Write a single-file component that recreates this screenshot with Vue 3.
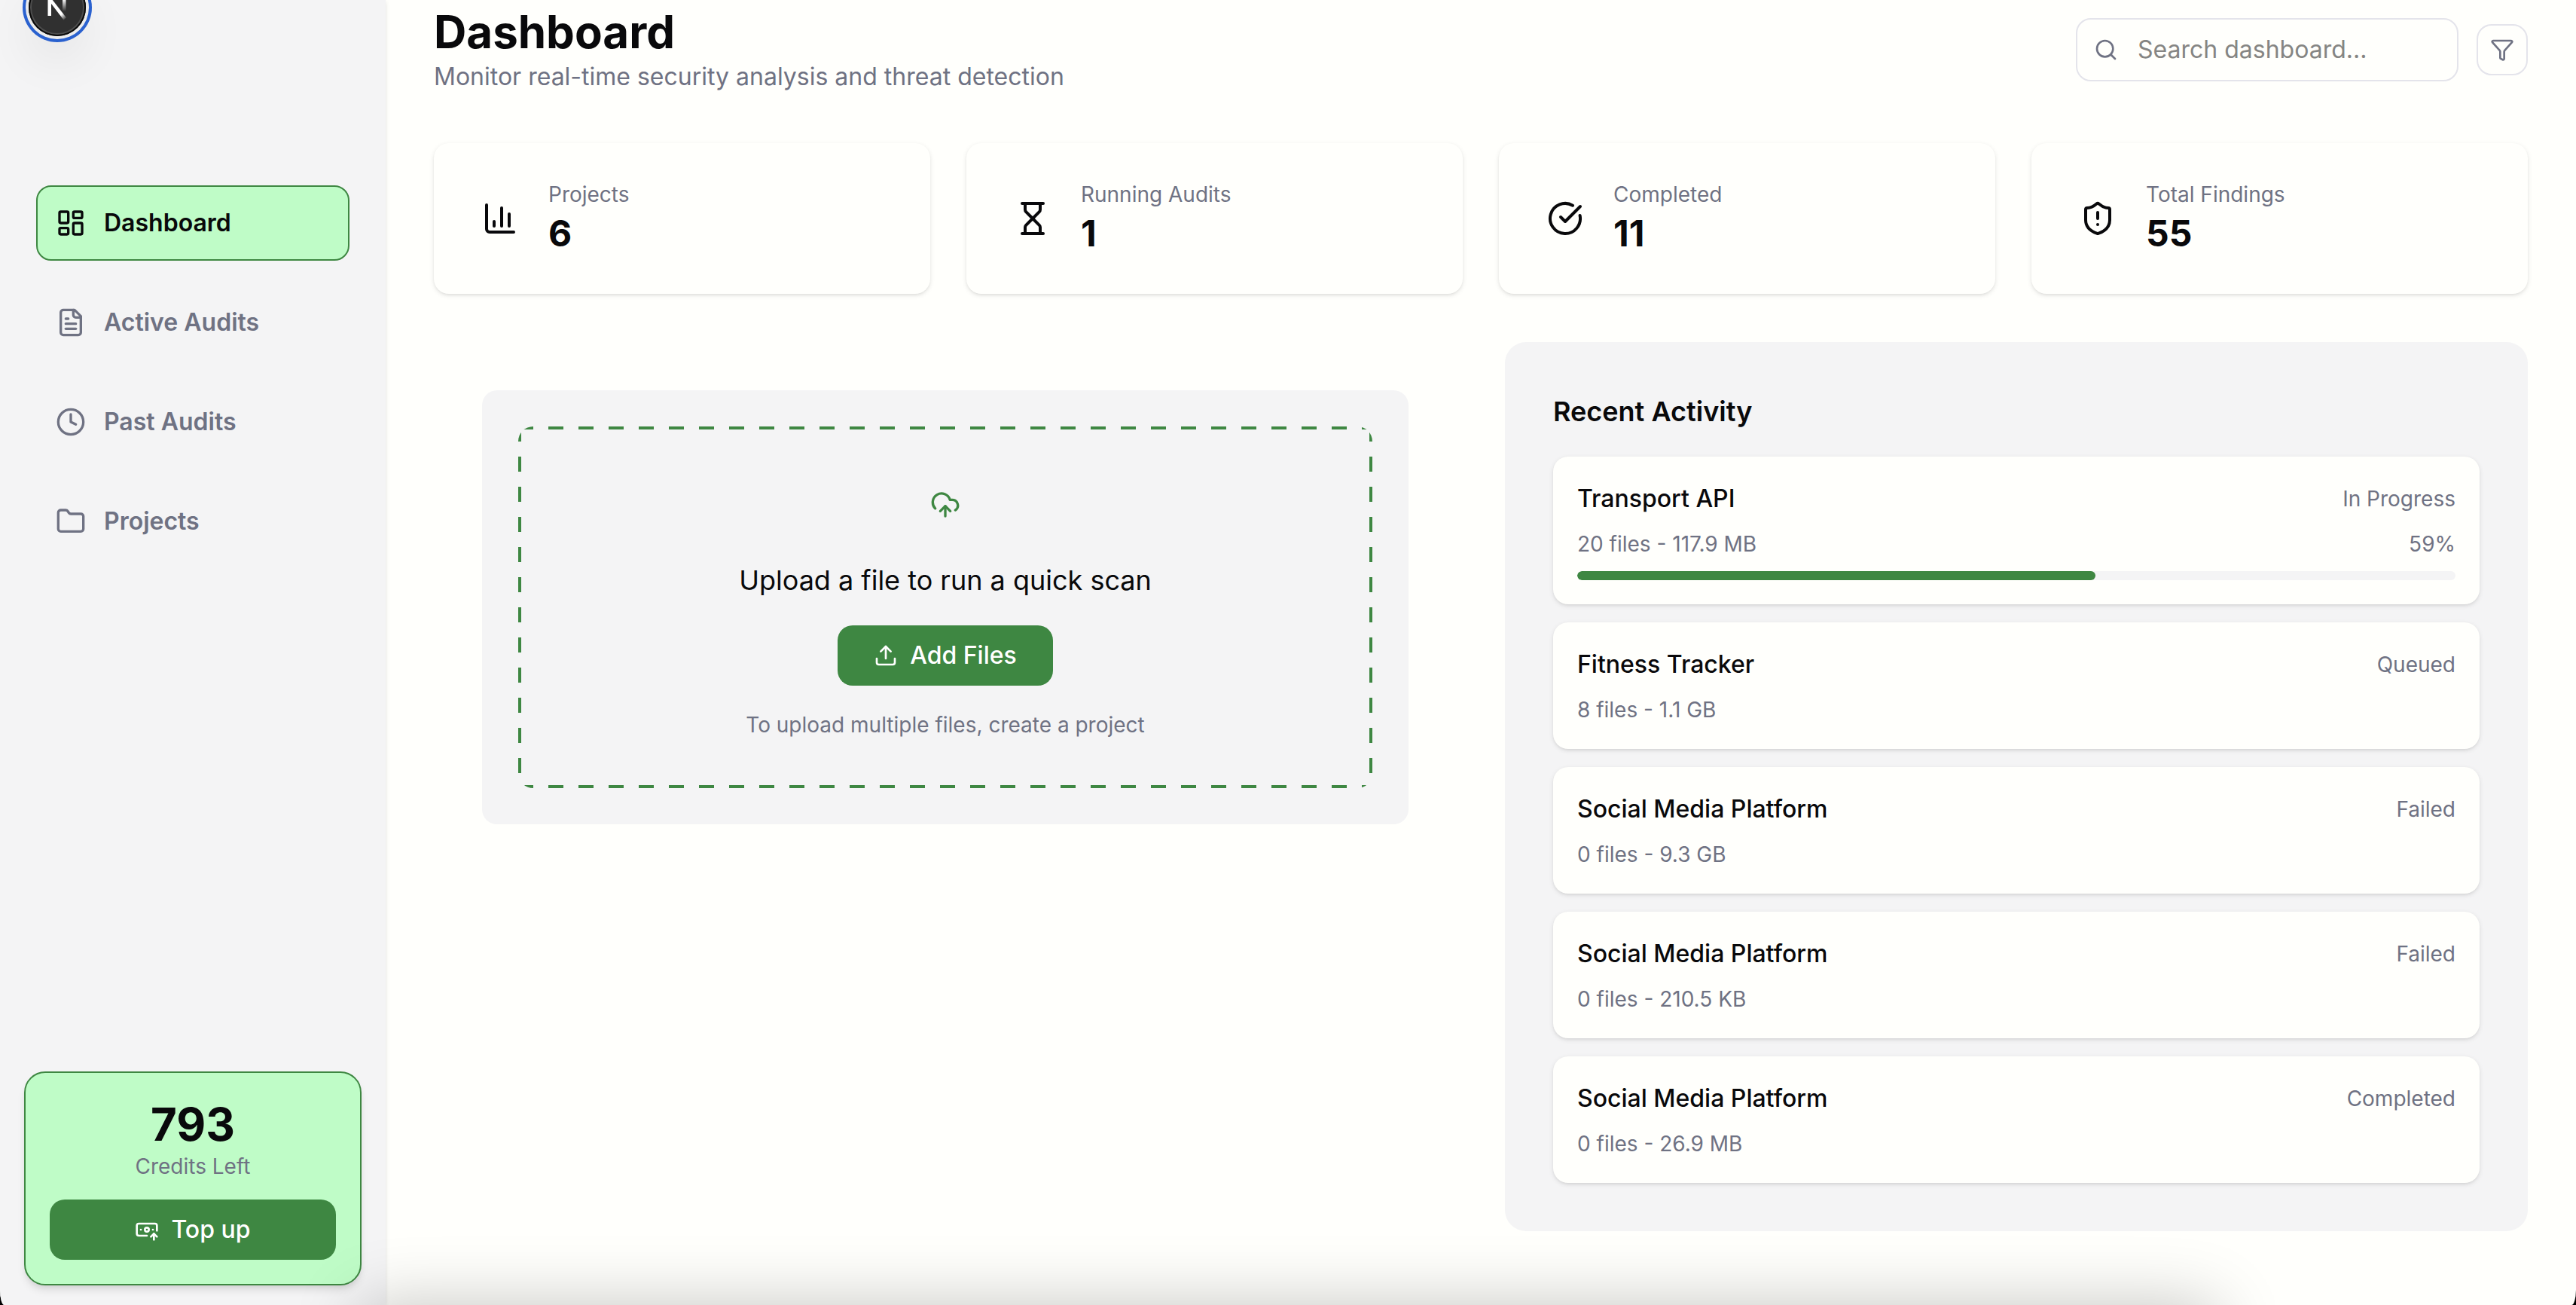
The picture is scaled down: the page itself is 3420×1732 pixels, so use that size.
<script setup>
import { ref } from 'vue'

const query = ref('')

const icons = {
  dashboard: [
    'M4 3h5a1 1 0 0 1 1 1v7a1 1 0 0 1-1 1H4a1 1 0 0 1-1-1V4a1 1 0 0 1 1-1z',
    'M15 3h5a1 1 0 0 1 1 1v3a1 1 0 0 1-1 1h-5a1 1 0 0 1-1-1V4a1 1 0 0 1 1-1z',
    'M15 12h5a1 1 0 0 1 1 1v7a1 1 0 0 1-1 1h-5a1 1 0 0 1-1-1v-7a1 1 0 0 1 1-1z',
    'M4 16h5a1 1 0 0 1 1 1v3a1 1 0 0 1-1 1H4a1 1 0 0 1-1-1v-3a1 1 0 0 1 1-1z',
  ],
  file: [
    'M15 2H6a2 2 0 0 0-2 2v16a2 2 0 0 0 2 2h12a2 2 0 0 0 2-2V7z',
    'M14 2v4a2 2 0 0 0 2 2h4',
    'M10 9H8',
    'M16 13H8',
    'M16 17H8',
  ],
  clock: ['M12 2a10 10 0 1 0 0 20a10 10 0 1 0 0-20z', 'M12 6v6l4 2'],
  folder: [
    'M20 20a2 2 0 0 0 2-2V8a2 2 0 0 0-2-2h-7.9a2 2 0 0 1-1.69-.9L9.6 3.9A2 2 0 0 0 7.93 3H4a2 2 0 0 0-2 2v13a2 2 0 0 0 2 2Z',
  ],
  chart: ['M3 3v16a2 2 0 0 0 2 2h16', 'M18 17V9', 'M13 17V5', 'M8 17v-3'],
  hourglass: [
    'M5 22h14',
    'M5 2h14',
    'M17 22v-4.172a2 2 0 0 0-.586-1.414L12 12l-4.414 4.414A2 2 0 0 0 7 17.828V22',
    'M7 2v4.172a2 2 0 0 0 .586 1.414L12 12l4.414-4.414A2 2 0 0 0 17 6.172V2',
  ],
  check: ['M21.801 10A10 10 0 1 1 17 3.335', 'm9 11 3 3L22 4'],
  shield: [
    'M20 13c0 5-3.5 7.5-7.66 8.95a1 1 0 0 1-.67-.01C7.5 20.5 4 18 4 13V6a1 1 0 0 1 1-1c2 0 4.5-1.2 6.24-2.72a1.17 1.17 0 0 1 1.52 0C14.51 3.81 17 5 19 5a1 1 0 0 1 1 1z',
    'M12 8v4',
    'M12 16h.01',
  ],
}

const navItems = [
  { label: 'Dashboard', icon: 'dashboard', active: true },
  { label: 'Active Audits', icon: 'file' },
  { label: 'Past Audits', icon: 'clock' },
  { label: 'Projects', icon: 'folder' },
]

const stats = [
  { label: 'Projects', value: 6, icon: 'chart' },
  { label: 'Running Audits', value: 1, icon: 'hourglass' },
  { label: 'Completed', value: 11, icon: 'check' },
  { label: 'Total Findings', value: 55, icon: 'shield' },
]

const activity = [
  { name: 'Transport API', meta: '20 files - 117.9 MB', status: 'In Progress', progress: 59 },
  { name: 'Fitness Tracker', meta: '8 files - 1.1 GB', status: 'Queued' },
  { name: 'Social Media Platform', meta: '0 files - 9.3 GB', status: 'Failed' },
  { name: 'Social Media Platform', meta: '0 files - 210.5 KB', status: 'Failed' },
  { name: 'Social Media Platform', meta: '0 files - 26.9 MB', status: 'Completed' },
]
</script>

<template>
  <div class="shell">
    <aside class="sidebar">
      <nav class="nav" aria-label="Main">
        <a
          v-for="item in navItems"
          :key="item.label"
          href="#"
          class="nav-link"
          :class="{ active: item.active }"
          :aria-current="item.active ? 'page' : undefined"
        >
          <svg class="icon icon-md" viewBox="0 0 24 24" aria-hidden="true">
            <path v-for="d in icons[item.icon]" :key="d" :d="d" />
          </svg>
          <span>{{ item.label }}</span>
        </a>
      </nav>

      <section class="credits">
        <strong class="credits-value">793</strong>
        <span class="credits-label">Credits Left</span>
        <button type="button" class="btn btn-wide">
          <svg class="icon icon-sm" viewBox="0 0 24 24" aria-hidden="true">
            <path d="M12 18H4a2 2 0 0 1-2-2V8a2 2 0 0 1 2-2h16a2 2 0 0 1 2 2v5" />
            <path d="M18 12h.01" />
            <path d="M19 22v-6" />
            <path d="m22 19-3-3-3 3" />
            <path d="M6 12h.01" />
            <circle cx="12" cy="12" r="2" />
          </svg>
          Top up
        </button>
      </section>
    </aside>

    <main class="main">
      <header class="header">
        <div>
          <h1 class="title">Dashboard</h1>
          <p class="subtitle">Monitor real-time security analysis and threat detection</p>
        </div>
        <div class="tools">
          <label class="search">
            <svg class="icon icon-sm" viewBox="0 0 24 24" aria-hidden="true">
              <circle cx="11" cy="11" r="8" />
              <path d="m21 21-4.34-4.34" />
            </svg>
            <input v-model="query" type="search" placeholder="Search dashboard..." aria-label="Search dashboard" />
          </label>
          <button type="button" class="filter" aria-label="Filter">
            <svg class="icon icon-sm" viewBox="0 0 24 24" aria-hidden="true">
              <path
                d="M10 20a1 1 0 0 0 .553.895l2 1A1 1 0 0 0 14 21v-7a2 2 0 0 1 .517-1.341L21.74 4.67A1 1 0 0 0 21 3H3a1 1 0 0 0-.742 1.67l7.225 7.989A2 2 0 0 1 10 14z"
              />
            </svg>
          </button>
        </div>
      </header>

      <section class="stats" aria-label="Summary">
        <article v-for="stat in stats" :key="stat.label" class="stat">
          <svg class="icon icon-lg" viewBox="0 0 24 24" aria-hidden="true">
            <path v-for="d in icons[stat.icon]" :key="d" :d="d" />
          </svg>
          <div>
            <p class="stat-label">{{ stat.label }}</p>
            <p class="stat-value">{{ stat.value }}</p>
          </div>
        </article>
      </section>

      <div class="columns">
        <section class="upload-area">
          <div class="upload-card">
            <div class="dropzone">
              <span class="cloud">
                <svg class="icon icon-md" viewBox="0 0 24 24" aria-hidden="true">
                  <path d="M12 13v8" />
                  <path d="M4 14.899A7 7 0 1 1 15.71 8h1.79a4.5 4.5 0 0 1 2.5 8.242" />
                  <path d="m8 17 4-4 4 4" />
                </svg>
              </span>
              <p class="upload-title">Upload a file to run a quick scan</p>
              <button type="button" class="btn">
                <svg class="icon icon-sm" viewBox="0 0 24 24" aria-hidden="true">
                  <path d="M12 3v12" />
                  <path d="m17 8-5-5-5 5" />
                  <path d="M21 15v4a2 2 0 0 1-2 2H5a2 2 0 0 1-2-2v-4" />
                </svg>
                Add Files
              </button>
              <p class="upload-note">To upload multiple files, create a project</p>
            </div>
          </div>
        </section>

        <section class="panel">
          <h2 class="panel-title">Recent Activity</h2>
          <ul class="activity">
            <li v-for="(entry, i) in activity" :key="i" class="entry">
              <div class="entry-row">
                <h3 class="entry-name">{{ entry.name }}</h3>
                <span class="small">{{ entry.status }}</span>
              </div>
              <div class="entry-row">
                <span class="small">{{ entry.meta }}</span>
                <span v-if="entry.progress" class="small">{{ entry.progress }}%</span>
              </div>
              <div
                v-if="entry.progress"
                class="track"
                role="progressbar"
                aria-label="Audit progress"
                aria-valuemin="0"
                aria-valuemax="100"
                :aria-valuenow="entry.progress"
              >
                <div class="fill" :style="{ width: entry.progress + '%' }"></div>
              </div>
            </li>
          </ul>
        </section>
      </div>
    </main>

    <button type="button" class="devtools" aria-label="Open developer tools">
      <svg viewBox="0 0 76 76" aria-hidden="true">
        <defs>
          <linearGradient id="diagonalFade" gradientUnits="userSpaceOnUse" x1="38" y1="40" x2="49" y2="54">
            <stop offset="0" stop-color="#fff" />
            <stop offset="0.5" stop-color="#fff" />
            <stop offset="1" stop-color="#fff" stop-opacity="0" />
          </linearGradient>
          <linearGradient id="stemFade" gradientUnits="userSpaceOnUse" x1="47" y1="27" x2="47" y2="43">
            <stop offset="0" stop-color="#fff" />
            <stop offset="1" stop-color="#fff" stop-opacity="0" />
          </linearGradient>
        </defs>
        <rect x="25.500" y="27" width="4.500" height="22" fill="#fff" />
        <path d="M25.500 27h5.500l19 24.500-3.500 3z" fill="url(#diagonalFade)" />
        <rect x="45" y="27" width="4.500" height="16" fill="url(#stemFade)" />
      </svg>
    </button>
    <div class="dock-shadow" aria-hidden="true"></div>
  </div>
</template>

<style>
html,
body {
  background: #000;
}
</style>

<style scoped>
.shell {
  --bg: #fffffc;
  --surface: #f4f4f5;
  --ink: #09090b;
  --muted: #6f7283;
  --line: #e4e4eb;
  --green: #3e8742;
  --mint: #bffcc7;
  --shadow: 0 2px 6px rgba(0, 0, 0, 0.1), 0 2px 4px -2px rgba(0, 0, 0, 0.1);
  position: relative;
  display: flex;
  min-height: 100vh;
  overflow: hidden;
  border-radius: 0 0 6px 6px / 0 0 20px 20px;
  background: var(--bg);
  color: var(--ink);
  font-family: Inter, "Liberation Sans", sans-serif;
  font-size: 32px;
  line-height: 48px;
}

.shell *,
.shell *::before {
  box-sizing: border-box;
}

h1,
h2,
h3,
p,
ul {
  margin: 0;
  padding: 0;
}

button,
input {
  font: inherit;
}

.icon {
  flex: none;
  fill: none;
  stroke: currentColor;
  stroke-width: 2;
  stroke-linecap: round;
  stroke-linejoin: round;
}

.icon-sm {
  width: 32px;
  height: 32px;
}

.icon-md {
  width: 40px;
  height: 40px;
}

.icon-lg {
  width: 48px;
  height: 48px;
}

/* Sidebar */
.sidebar {
  display: flex;
  flex: none;
  flex-direction: column;
  justify-content: space-between;
  width: 512px;
  padding: 246px 32px 26px;
  background: var(--surface);
  box-shadow: var(--shadow);
}

.nav {
  display: flex;
  flex-direction: column;
  gap: 32px;
  padding: 0 16px;
}

.nav-link {
  display: flex;
  align-items: center;
  gap: 24px;
  padding: 24px;
  border: 2px solid transparent;
  border-radius: 20px;
  color: var(--muted);
  font-weight: 600;
  text-decoration: none;
}

.nav-link.active {
  border-color: var(--green);
  background: var(--mint);
  color: var(--ink);
}

.credits {
  display: flex;
  flex-direction: column;
  align-items: center;
  padding: 32px;
  border: 2px solid var(--green);
  border-radius: 28px;
  background: var(--mint);
  box-shadow: 0 8px 12px -2px rgba(0, 0, 0, 0.1), 0 4px 8px -4px rgba(0, 0, 0, 0.1);
}

.credits-value {
  font-size: 60px;
  font-weight: 700;
  line-height: 72px;
}

.credits-label {
  margin-bottom: 24px;
  color: var(--muted);
  font-size: 28px;
  line-height: 40px;
}

.btn {
  display: flex;
  align-items: center;
  justify-content: center;
  gap: 16px;
  height: 80px;
  padding: 0 48px;
  border: 0;
  border-radius: 20px;
  background: var(--green);
  color: #fff;
  font-weight: 500;
}

.btn-wide {
  width: 100%;
}

/* Header */
.main {
  flex: 1;
  min-width: 0;
  padding: 6px 64px 98px;
}

.header {
  display: flex;
  align-items: center;
  justify-content: space-between;
  margin-bottom: 64px;
}

.title {
  font-size: 60px;
  font-weight: 700;
  line-height: 72px;
}

.subtitle {
  color: var(--muted);
}

.tools {
  display: flex;
  align-items: center;
  gap: 24px;
}

.search {
  display: flex;
  align-items: center;
  gap: 26px;
  width: 508px;
  height: 84px;
  padding: 0 22px;
  border: 2px solid var(--line);
  border-radius: 20px;
  color: var(--muted);
}

.search input {
  flex: 1;
  min-width: 0;
  padding: 0;
  border: 0;
  outline: 0;
  background: transparent;
  color: var(--ink);
}

.search input::placeholder {
  color: #858583;
  opacity: 1;
}

.filter {
  display: grid;
  place-items: center;
  width: 68px;
  height: 68px;
  padding: 0;
  border: 2px solid var(--line);
  border-radius: 20px;
  background: transparent;
  color: var(--muted);
}

/* Summary cards */
.stats {
  display: grid;
  grid-template-columns: repeat(4, 1fr);
  gap: 48px;
  margin-bottom: 64px;
}

.stat {
  display: flex;
  align-items: center;
  gap: 40px;
  padding: 48px 64px;
  border-radius: 20px;
  background: var(--bg);
  box-shadow: var(--shadow);
}

.stat-label {
  color: var(--muted);
  font-size: 28px;
  line-height: 40px;
}

.stat-value {
  font-size: 48px;
  font-weight: 700;
  line-height: 64px;
}

/* Upload */
.columns {
  display: grid;
  grid-template-columns: 1fr 1fr;
  align-items: start;
  gap: 64px;
}

.upload-area {
  padding: 64px;
}

.upload-card {
  padding: 48px;
  border-radius: 20px;
  background: var(--surface);
}

.dropzone {
  --dash: var(--green) 0 20px, transparent 20px 40px;
  display: flex;
  flex-direction: column;
  align-items: center;
  gap: 32px;
  padding: 64px;
  border-radius: 20px;
  background:
    repeating-linear-gradient(to right, var(--dash)) top / 100% 4px no-repeat,
    repeating-linear-gradient(to right, var(--dash)) bottom / 100% 4px no-repeat,
    repeating-linear-gradient(to bottom, var(--dash)) left / 4px 100% no-repeat,
    repeating-linear-gradient(to bottom, var(--dash)) right / 4px 100% no-repeat;
}

.cloud {
  display: grid;
  place-items: center;
  width: 80px;
  height: 80px;
  color: var(--green);
}

.upload-title {
  font-size: 36px;
  line-height: 56px;
}

.upload-note,
.small {
  color: var(--muted);
  font-size: 28px;
  line-height: 40px;
}

/* Recent activity */
.panel {
  padding: 64px;
  border-radius: 28px;
  background: var(--surface);
}

.panel-title {
  margin-bottom: 32px;
  font-size: 36px;
  font-weight: 600;
  line-height: 56px;
}

.activity {
  display: flex;
  flex-direction: column;
  gap: 24px;
  list-style: none;
}

.entry {
  display: flex;
  flex-direction: column;
  gap: 16px;
  padding: 32px;
  border-radius: 20px;
  background: var(--bg);
  box-shadow: var(--shadow);
}

.entry-row {
  display: flex;
  align-items: center;
  justify-content: space-between;
}

.entry-name {
  font-size: 32px;
  font-weight: 500;
  line-height: 48px;
}

.track {
  height: 12px;
  overflow: hidden;
  border-radius: 6px;
  background: var(--surface);
}

.fill {
  height: 100%;
  border-radius: 6px;
  background: var(--green);
}

/* Floating layers */
.devtools {
  position: absolute;
  top: -28px;
  left: 38px;
  width: 76px;
  height: 76px;
  padding: 0;
  border: 0;
  border-radius: 50%;
  background: #303030;
  box-shadow:
    inset 0 0 0 2px #0a0a0a,
    inset 0 0 0 4px #4d4d4d,
    0 0 0 4px #ececec,
    0 0 0 8px #2a61cf,
    0 32px 64px rgba(0, 0, 30, 0.07);
}

.devtools svg {
  display: block;
  width: 100%;
  height: 100%;
}

.dock-shadow {
  position: fixed;
  top: 100%;
  right: 14%;
  left: 14%;
  height: 200px;
  box-shadow: 0 0 90px rgba(0, 0, 0, 0.23);
  pointer-events: none;
}
</style>
